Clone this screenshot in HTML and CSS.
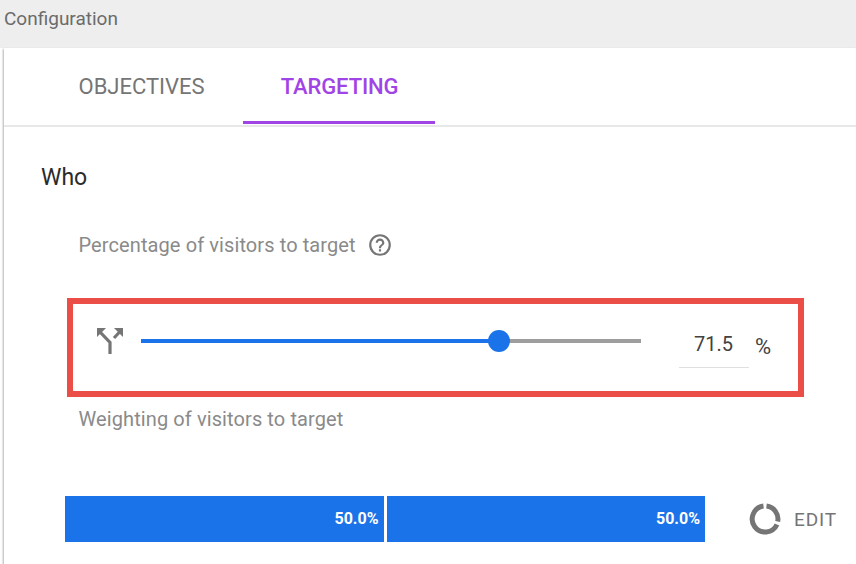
FILE: index.html
```html
<!DOCTYPE html>
<html lang="en">
<head>
  <meta charset="UTF-8" />
  <meta name="viewport" content="width=device-width, initial-scale=1.0" />
  <title>Configuration</title>
  <link rel="stylesheet" href="styles.css">
</head>
<body>
  <header class="top">Configuration</header>
  <div class="panel">
    <nav class="tabs">
      <a class="tab">OBJECTIVES</a>
      <a class="tab active">TARGETING</a>
    </nav>
    <div class="content">
      <h2 class="section">Who</h2>
      <div class="label-row">
        <span class="label">Percentage of visitors to target</span>
        <svg class="help" width="26" height="26" viewBox="0 0 24 24" fill="#757575">
          <path d="M12 2a10 10 0 1 0 0 20 10 10 0 0 0 0-20zm0 18a8 8 0 1 1 0-16 8 8 0 0 1 0 16z"/>
          <path d="M11 16h2v2h-2zM12 6a4 4 0 0 0-4 4h2a2 2 0 1 1 4 0c0 2-3 1.75-3 5h2c0-2.25 3-2.5 3-5a4 4 0 0 0-4-4z"/>
        </svg>
      </div>
      <div class="traffic-box">
        <svg class="split" width="30" height="30" viewBox="0 0 30 30" fill="none" stroke="#757575" stroke-width="3.2">
          <path d="M15 28V16.500L5 6"/>
          <path d="M19 12L25.500 5"/>
          <path d="M2 2h9L2 11z" fill="#757575" stroke="none"/>
          <path d="M28 2h-9l9 9z" fill="#757575" stroke="none"/>
        </svg>
        <div class="slider">
          <div class="fill" style="width: 71.5%"></div>
          <div class="rest"></div>
          <div class="thumb" style="left: 71.5%"></div>
        </div>
        <div class="value">71.5</div>
        <span class="unit">%</span>
      </div>
      <div class="label weight-label">Weighting of visitors to target</div>
      <div class="weights">
        <div class="bar">
          <div class="part">50.0%</div>
          <div class="part">50.0%</div>
        </div>
        <a class="edit">
          <svg width="32" height="32" viewBox="0 0 32 32" fill="none" stroke="#757575" stroke-width="5">
            <path d="M14.500 3.100A13 13 0 1 0 28 21.500"/>
            <path d="M17.500 3.100A13 13 0 0 1 28.700 18.500"/>
          </svg>
          EDIT
        </a>
      </div>
    </div>
  </div>
</body>
</html>
```

FILE: styles.css
```css
html, body { margin: 0; height: 100%; }
body { font-family: Roboto, Arial, sans-serif; background: #fff; color: #212121; overflow: hidden; }

.top { height: 48px; background: #eeeeee; color: #6b6b6b; font-size: 19px; line-height: 38px; padding-left: 4px; box-sizing: border-box; }

.panel { margin-left: 4px; height: 516px; background: #fff; box-shadow: -1px 1px 2px rgba(0,0,0,0.3); }

.tabs { display: flex; height: 77px; padding-left: 37px; border-bottom: 2px solid #e8e8e8; }
.tab { padding: 0 38.5px 0 37.5px; font-size: 22px; line-height: 77px; color: #757575; height: 76px; box-sizing: border-box; }
.tab.active { padding: 0 37px 0 37.5px; color: #a144e6; font-weight: 500; letter-spacing: -0.1px; border-bottom: 3px solid #a144e6; }

.content { padding-left: 37px; }
.section { margin: 0; padding-top: 35px; font-size: 23px; font-weight: 400; line-height: 32px; color: #2b2b2b; }

.label { font-size: 20px; letter-spacing: 0.1px; color: #8a8a8a; }
.label-row { display: flex; align-items: center; gap: 11px; margin-top: 37px; margin-left: 37.5px; height: 28px; }

.traffic-box { display: flex; align-items: center; box-sizing: border-box; width: 737px; height: 99px; margin-top: 39px; margin-left: 26px; border: 6px solid #eb4d47; padding-left: 22px; }
.split { flex: none; margin-bottom: 13px; }
.slider { position: relative; display: flex; width: 500px; height: 4px; margin-left: 16px; margin-bottom: 13px; }
.fill { background: #1a73e8; }
.rest { flex: 1; background: #9e9e9e; }
.thumb { position: absolute; top: -9px; width: 22px; height: 22px; margin-left: -11px; border-radius: 50%; background: #1a73e8; }
.value { width: 70px; margin-left: 38px; margin-bottom: 8px; padding-right: 16px; box-sizing: border-box; height: 48px; line-height: 48px; text-align: right; font-size: 20px; color: #424242; border-bottom: 1px solid #e0e0e0; }
.unit { margin-left: 6px; margin-bottom: 2px; font-size: 22px; color: #424242; }

.weight-label { margin-top: 9px; margin-left: 37.5px; line-height: 26px; }

.weights { display: flex; align-items: center; margin-top: 64px; margin-left: 24px; }
.bar { display: flex; gap: 3px; width: 640px; height: 46px; }
.part { flex: 1; background: #1a73e8; color: #fff; font-size: 16px; font-weight: 700; line-height: 46px; text-align: right; padding-right: 5px; }
.edit { display: flex; align-items: center; gap: 13px; margin-left: 44px; font-size: 19px; color: #757575; letter-spacing: 0.9px; }
```
